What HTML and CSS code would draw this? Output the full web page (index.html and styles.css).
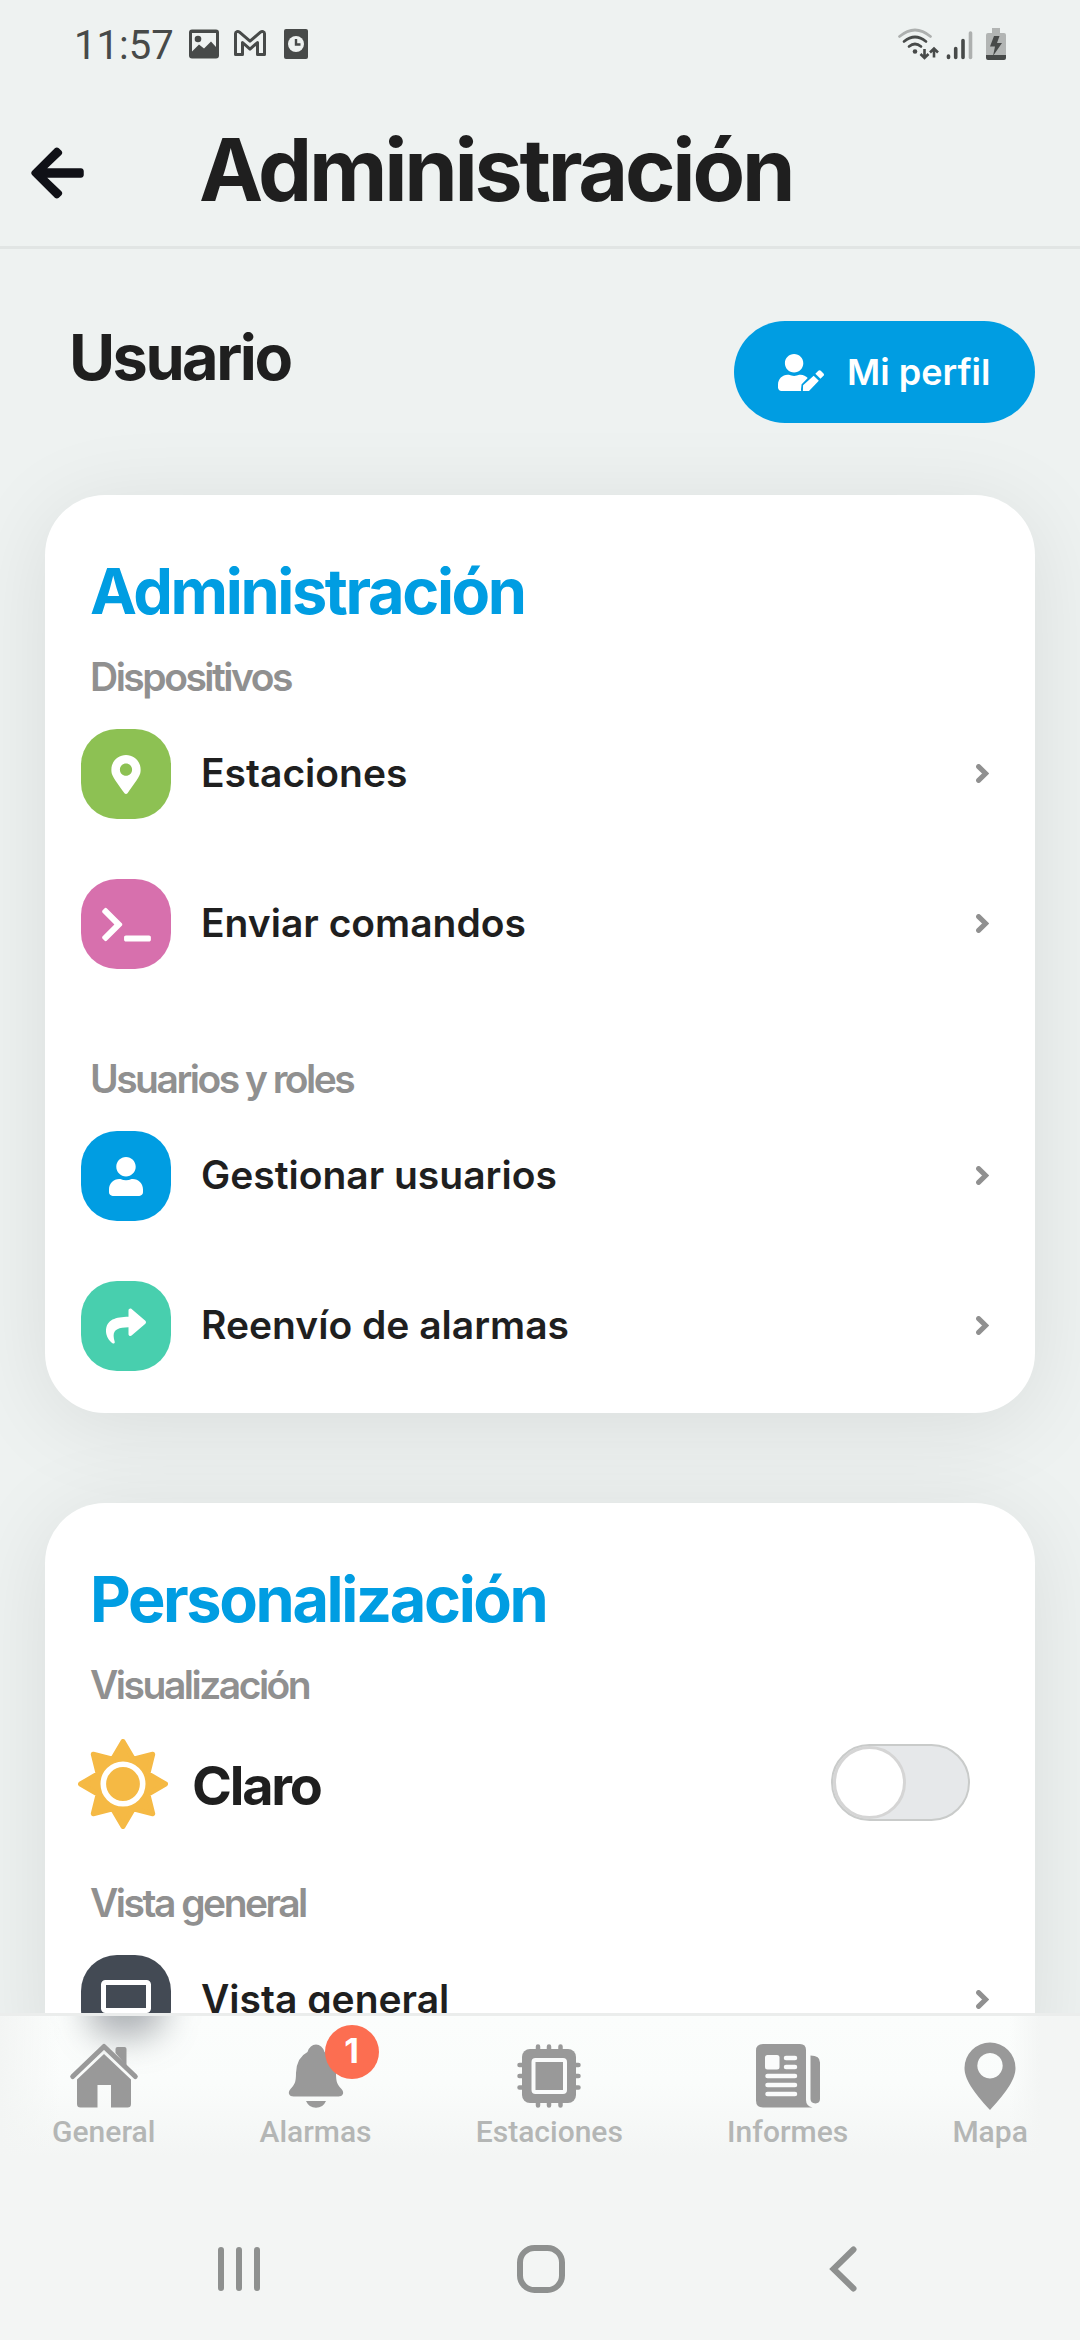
FILE: index.html
```html
<!DOCTYPE html>
<html lang="es">
<head>
<meta charset="utf-8">
<title>Administración</title>
<link rel="stylesheet" href="styles.css">
</head>
<body>
<svg width="0" height="0" class="defs">
  <symbol id="chevron" viewBox="0 0 13 19"><path d="M2.600 2.600 9.600 9.500 2.600 16.400" fill="none" stroke="#909090" stroke-width="5" stroke-linecap="round"/></symbol>
</svg>
<div class="screen">
  <div class="status">
    <span class="clock">11:57</span>
    <svg class="status-left" width="120" height="32" viewBox="188 28 120 32">
      <path fill="#474a49" fill-rule="evenodd" d="M192 29.500h24a3 3 0 0 1 3 3v23a3 3 0 0 1-3 3h-24a3 3 0 0 1-3-3v-23a3 3 0 0 1 3-3zM192 33v18.500l7-7 5 4 7-7 5 5.500V33z"/>
      <circle cx="198" cy="39" r="3.300" fill="#474a49"/>
      <path fill="none" stroke="#474a49" stroke-width="3" stroke-linejoin="round" d="M235.500 54.500V33.500c0-2 2.400-2.600 4-1.300l10.500 9 10.500-9c1.600-1.300 4-.7 4 1.300V54.500h-7V42.500L250 49.200l-7.500-6.700V54.500z"/>
      <rect x="284" y="29" width="24" height="30" rx="2" fill="#474a49"/>
      <circle cx="296" cy="44" r="8" fill="#eef2f1"/>
      <path d="M296 39v5.500h4.500" fill="none" stroke="#474a49" stroke-width="2.400"/>
    </svg>
    <svg class="status-right" width="110" height="34" viewBox="897 27 110 34">
      <g fill="none" stroke-width="2.700" stroke-linecap="round">
        <path stroke="#adb0af" d="M899.500 36.500q15.500-13 31 0"/>
        <path stroke="#474a49" d="M904 41.500q11-9 22 0M909 46.500q6-5 12 0"/>
      </g>
      <circle cx="915" cy="51.500" r="2.300" fill="#474a49"/>
      <path fill="none" stroke="#474a49" stroke-width="2.600" d="M924.500 49v9m-4-4 4 4 4-4M934 57.500v-9m-4 4 4-4 4 4"/>
      <g stroke="#474a49" stroke-width="3.600" stroke-linecap="round"><path d="M948.500 56v1.500M955.700 48.500v9M963 40.500v17"/><path stroke="#adb0af" d="M970.500 33v24.500"/></g>
      <path fill="#b2b5b4" d="M992 28h8v5h4q2 0 2 2v22H986V35q0-2 2-2h4z"/>
      <path fill="#474a49" d="M986 55h20v3q0 2-2 2h-16q-2 0-2-2zM994 36h5.500l-2.500 7h5l-9 13 2-9.500h-5z"/>
    </svg>
  </div>

  <header class="header">
    <svg class="back" width="53" height="60" viewBox="0 0 448 512"><path fill="#101117" d="M257.500 445.100l-22.200 22.200c-9.400 9.400-24.600 9.400-33.900 0L7 273c-9.400-9.400-9.400-24.600 0-33.900L201.400 44.700c9.400-9.400 24.600-9.400 33.900 0l22.200 22.200c9.500 9.500 9.300 25-.4 34.300L136.600 216H424c13.300 0 24 10.700 24 24v32c0 13.300-10.700 24-24 24H136.600l120.500 114.800c9.800 9.300 10 24.800.4 34.300z"/></svg>
    <h1 class="page-title">Administración</h1>
  </header>

  <main class="content">
    <div class="user-bar">
      <h2 class="user-title">Usuario</h2>
      <button class="profile">
        <svg width="46" height="37" viewBox="0 0 640 512"><path fill="#fff" d="M224 256c70.700 0 128-57.300 128-128S294.700 0 224 0 96 57.300 96 128s57.300 128 128 128zm89.600 32h-16.700c-22.200 10.200-46.900 16-72.900 16s-50.600-5.800-72.900-16h-16.700C60.200 288 0 348.200 0 422.400V464c0 26.500 21.500 48 48 48h274.900c-2.400-6.800-3.400-14-2.600-21.300l6.800-60.900 1.200-11.100 7.900-7.900 77.300-77.300c-24.500-27.700-60-45.500-99.900-45.500zM349 433l-3 79h85l137-140-71.700-71.700zM633 268.900L595.100 231c-9.300-9.300-24.500-9.300-33.800 0l-37.800 37.800-4.100 4.100 71.800 71.700 41.800-41.800c9.300-9.400 9.300-24.500 0-33.900z"/></svg>
        <span>Mi perfil</span>
      </button>
    </div>

    <section class="card">
      <h2 class="card-title">Administración</h2>
      <h3 class="group-title">Dispositivos</h3>
      <div class="rows">
        <a class="row">
          <span class="tile green"><svg width="30" height="39" viewBox="0 0 384 512"><path fill="#fff" d="M172.268 501.670C26.970 291.031 0 269.413 0 192 0 85.961 85.961 0 192 0s192 85.961 192 192c0 77.413-26.970 99.031-172.268 309.670-9.535 13.774-29.930 13.773-39.464 0zM192 272c44.183 0 80-35.817 80-80s-35.817-80-80-80-80 35.817-80 80 35.817 80 80 80z"/></svg></span>
          <span class="label">Estaciones</span><svg class="chev" width="13" height="19"><use href="#chevron"/></svg>
        </a>
        <a class="row">
          <span class="tile pink"><svg width="49" height="39" viewBox="0 0 640 512"><path fill="#fff" d="M257.981 272.971L63.638 467.314c-9.373 9.373-24.569 9.373-33.941 0L7.029 444.647c-9.357-9.357-9.375-24.522-.04-33.901L161.011 256 6.990 101.255c-9.335-9.379-9.317-24.544.04-33.901l22.667-22.667c9.373-9.373 24.569-9.373 33.941 0L257.981 239.030c9.373 9.372 9.373 24.568 0 33.941zM640 456v-32c0-13.255-10.745-24-24-24H312c-13.255 0-24 10.745-24 24v32c0 13.255 10.745 24 24 24h304c13.255 0 24-10.745 24-24z"/></svg></span>
          <span class="label">Enviar comandos</span><svg class="chev" width="13" height="19"><use href="#chevron"/></svg>
        </a>
      </div>
      <h3 class="group-title spaced">Usuarios y roles</h3>
      <div class="rows">
        <a class="row">
          <span class="tile blue"><svg width="34" height="39" viewBox="0 0 448 512"><path fill="#fff" d="M224 256c70.700 0 128-57.300 128-128S294.700 0 224 0 96 57.300 96 128s57.300 128 128 128zm89.600 32h-16.700c-22.200 10.200-46.900 16-72.900 16s-50.600-5.800-72.900-16h-16.700C60.200 288 0 348.200 0 422.400V464c0 26.500 21.500 48 48 48h352c26.500 0 48-21.500 48-48v-41.600c0-74.200-60.200-134.400-134.400-134.400z"/></svg></span>
          <span class="label">Gestionar usuarios</span><svg class="chev" width="13" height="19"><use href="#chevron"/></svg>
        </a>
        <a class="row">
          <span class="tile teal"><svg width="40" height="40" viewBox="0 0 512 512"><path fill="#fff" d="M503.691 189.836L327.687 37.851C312.281 24.546 288 35.347 288 56.015v80.053C127.371 137.907 0 170.100 0 322.326c0 61.441 39.581 122.309 83.333 154.132 13.653 9.931 33.111-2.533 28.077-18.631C66.066 312.814 132.917 274.316 288 272.085V360c0 20.700 24.300 31.453 39.687 18.164l176.004-152c11.071-9.562 11.086-26.753 0-36.328z"/></svg></span>
          <span class="label">Reenvío de alarmas</span><svg class="chev" width="13" height="19"><use href="#chevron"/></svg>
        </a>
      </div>
    </section>

    <section class="card">
      <h2 class="card-title">Personalización</h2>
      <h3 class="group-title">Visualización</h3>
      <div class="theme-row">
        <svg width="90" height="90" viewBox="0 0 90 90">
          <path fill="#f5b944" stroke="#f5b944" stroke-width="5" stroke-linejoin="round" d="M45 2.500 55.300 20.100 74.700 15.300 69.900 34.700 87.500 45 69.900 55.300 74.700 74.700 55.300 69.900 45 87.500 34.700 69.900 15.300 74.700 20.100 55.300 2.500 45 20.100 34.700 15.300 15.300 34.700 20.100z"/>
          <circle cx="45" cy="45" r="19.700" fill="none" stroke="#fff" stroke-width="5.600"/>
        </svg>
        <span class="theme-name">Claro</span>
        <span class="toggle"><span class="knob"></span></span>
      </div>
      <h3 class="group-title after-theme">Vista general</h3>
      <div class="rows">
        <a class="row">
          <span class="tile slate"><svg width="50" height="40" viewBox="0 0 50 40"><rect x="2.500" y="2.500" width="45" height="28" rx="2" fill="none" stroke="#fff" stroke-width="5"/><path fill="#fff" d="M22.500 32h5v4h9v4h-23v-4h9z"/></svg></span>
          <span class="label">Vista general</span><svg class="chev" width="13" height="19"><use href="#chevron"/></svg>
        </a>
      </div>
    </section>
  </main>

  <nav class="tabs">
    <span class="glow"></span>
    <a class="tab">
      <svg width="72" height="72" viewBox="68 2040 72 72" fill="#999">
        <path fill="none" stroke="#999" stroke-width="5" stroke-linecap="round" stroke-linejoin="round" d="M72.700 2076.500 104 2046.500l31.300 30"/>
        <path d="M115.500 2053v-4q0-2 2-2h7q2 0 2 2v17zM104 2054l27 25.500V2104q0 3.500-3.500 3.500H111V2085H97.500v22.500H80.500q-3.500 0-3.500-3.500v-24.500z"/>
      </svg>
      <span>General</span>
    </a>
    <a class="tab">
      <span class="bell">
        <svg width="60" height="72" viewBox="286 2040 60 72" fill="#999"><path d="M316 2044.500q6 0 8.500 7.500 11 5.500 11.500 21c0 10 1.500 11.500 5.500 16 3.500 4 1 7.500-3 7.500h-45c-4 0-6.500-3.500-3-7.500 4-4.500 5.500-6 5.500-16q.5-15.500 11.500-21 2.500-7.500 8.500-7.500zM306 2101h20q-3 6.800-10 6.800t-10-6.800z"/></svg>
        <span class="badge">1</span>
      </span>
      <span>Alarmas</span>
    </a>
    <a class="tab">
      <svg width="72" height="72" viewBox="513 2040 72 72" fill="#999">
        <path fill="none" stroke="#999" stroke-width="4.500" stroke-linecap="round" d="M538 2046.500v59M549 2046.500v59M560.500 2046.500v59M519.500 2065h59M519.500 2076h59M519.500 2087.500h59"/>
        <rect x="522" y="2049" width="54" height="54" rx="8"/>
        <rect x="533.500" y="2060" width="31.500" height="32" rx="2" fill="#999" stroke="#fafbfb" stroke-width="4"/>
      </svg>
      <span>Estaciones</span>
    </a>
    <a class="tab">
      <svg width="72" height="72" viewBox="752 2040 72 72" fill="#999">
        <path d="M763 2044h37q6 0 6 6v50q0 6 6.500 7.500H763q-7 0-7-7v-50q0-6.500 7-6.500zM810.500 2055.500q9.500 0 9.500 7v36.500q0 4-4.500 4.500-5-.5-5-4.500z"/>
        <rect x="765" y="2055" width="14.500" height="14.500" rx="2.500" fill="#fafbfb"/>
        <path stroke="#fafbfb" stroke-width="4.500" stroke-linecap="round" d="M786 2058h9M786 2067h9M767.500 2076h27.500M767.500 2085h27.500M767.500 2094h27.500"/>
      </svg>
      <span>Informes</span>
    </a>
    <a class="tab">
      <svg width="60" height="72" viewBox="961 2040 60 72"><path fill="#999" fill-rule="evenodd" d="M991 2042.500a25.500 25.500 0 0 1 25.500 25.500c0 11-8 23-25.500 42-17.500-19-25.500-31-25.500-42a25.500 25.500 0 0 1 25.500-25.500zM991 2053a12.700 12.700 0 1 0 .01 0z"/></svg>
      <span>Mapa</span>
    </a>
  </nav>

  <div class="system-nav">
    <svg width="48" height="48" viewBox="0 0 48 48"><path stroke="#8e908f" stroke-width="6" stroke-linecap="round" d="M6 5v38M24 5v38M42 5v38"/></svg>
    <svg width="48" height="48" viewBox="0 0 48 48"><rect x="3" y="3" width="42" height="42" rx="14.500" fill="none" stroke="#8e908f" stroke-width="6"/></svg>
    <svg width="48" height="48" viewBox="0 0 48 48"><path fill="none" stroke="#8e908f" stroke-width="6" stroke-linecap="round" d="M34.500 4.500 14.500 24l20 19.500"/></svg>
  </div>
</div>
</body>
</html>
```
FILE: styles.css
```css
* { box-sizing: border-box; margin: 0; padding: 0; }
body { background: #eef2f1; font-family: Inter, "Liberation Sans", sans-serif; color: #1f1f1f; }
svg { display: block; flex: none; }
.defs { position: absolute; }
.screen { width: 1080px; height: 2340px; display: flex; flex-direction: column; overflow: hidden; }

.status { height: 90px; flex: none; display: flex; align-items: flex-start; padding: 28px 73px 0 74px; }
.clock { font: 400 40px/36px Roboto, sans-serif; color: #474a49; width: 114px; }
.status-right { margin-left: auto; margin-top: -1px; }

.header { height: 159px; flex: none; display: flex; align-items: flex-start; padding-left: 31px; border-bottom: 3px solid #e1e5e4; }
.back { margin-top: 53px; }
.page-title { margin: 28px 0 0 115px; font-size: 86px; line-height: 104px; font-weight: 700; letter-spacing: -3.25px; }

.content { height: 1764px; flex: none; overflow: hidden; padding: 72px 45px 0; display: flex; flex-direction: column; }
.user-bar { flex: none; display: flex; justify-content: space-between; align-items: flex-start; height: 102px; margin-bottom: 72px; padding-left: 24px; }
.user-title { margin-top: -3px; font-size: 63px; line-height: 78px; letter-spacing: -2.5px; }
.profile { display: flex; align-items: center; gap: 23px; height: 102px; width: 301px; padding-left: 44px; border: 0; border-radius: 51px; background: #009de2; color: #fff; font: 600 36px/44px Inter, sans-serif; }

.card { flex: none; background: #fff; border-radius: 60px; padding: 57px 46px 42px 36px; margin-bottom: 90px; box-shadow: 0 12px 90px rgba(0, 0, 0, .09); }
.card-title { margin-left: 9px; color: #009de2; font-size: 63px; line-height: 78px; letter-spacing: -2.37px; }
.group-title { margin: 23px 0 28px 9px; color: #909090; font-size: 39px; line-height: 48px; font-weight: 600; letter-spacing: -2.5px; }
.group-title.spaced { margin-top: 86px; }
.group-title.after-theme { margin-top: 50px; }
.rows { display: flex; flex-direction: column; gap: 60px; }
.row { display: flex; align-items: center; height: 90px; }
.tile { width: 90px; height: 90px; border-radius: 36px; display: flex; align-items: center; justify-content: center; }
.green { background: #8dc153; }
.pink { background: #d770ad; }
.blue { background: #009de2; }
.teal { background: #48cfae; }
.slate { background: #434a54; }
.label { margin-left: 30px; padding-bottom: 3px; font-size: 39px; font-weight: 600; }
.chev { margin-left: auto; margin-top: -1px; }

.theme-row { display: flex; align-items: center; height: 90px; margin: 30px 19px 0 -3px; }
.theme-name { margin-left: 24px; padding-top: 4px; font-size: 54px; line-height: 66px; font-weight: 700; letter-spacing: -2.2px; }
.toggle { margin: -3px 0 0 auto; width: 139px; height: 77px; border: 2px solid #c9cbca; border-radius: 39px; background: #e6e8ea; }
.knob { display: block; width: 73px; height: 73px; border: 3px solid #d5d5d5; border-radius: 50%; background: #fff; }

.tabs { position: relative; height: 183px; flex: none; display: flex; justify-content: space-around; border-top: 3px solid #ebedec; padding-top: 24px; background: linear-gradient(90deg, #f3f5f4 0, rgba(243, 245, 244, 0) 60px, rgba(243, 245, 244, 0) 1010px, #f3f5f4 1040px), linear-gradient(#fbfdfc 0, #fafcfb 68px, #f3f5f4 140px); overflow: hidden; }
.glow { position: absolute; left: 88px; top: -55px; width: 76px; height: 76px; border-radius: 24px; background: rgba(67, 74, 84, .42); filter: blur(17px); }
.tab { position: relative; display: flex; flex-direction: column; align-items: center; gap: 2px; color: #b4b6b5; font: 500 30px/36px Roboto, sans-serif; }
.bell { position: relative; }
.badge { position: absolute; left: 39px; top: -15px; width: 54px; height: 54px; border-radius: 50%; background: #fc6e51; color: #fff; text-align: center; font: 700 34px/51px Inter, sans-serif; }

.system-nav { height: 144px; flex: none; background: #f3f5f4; display: flex; justify-content: center; align-items: center; gap: 254px; padding: 1px 0 0 2px; }
```
